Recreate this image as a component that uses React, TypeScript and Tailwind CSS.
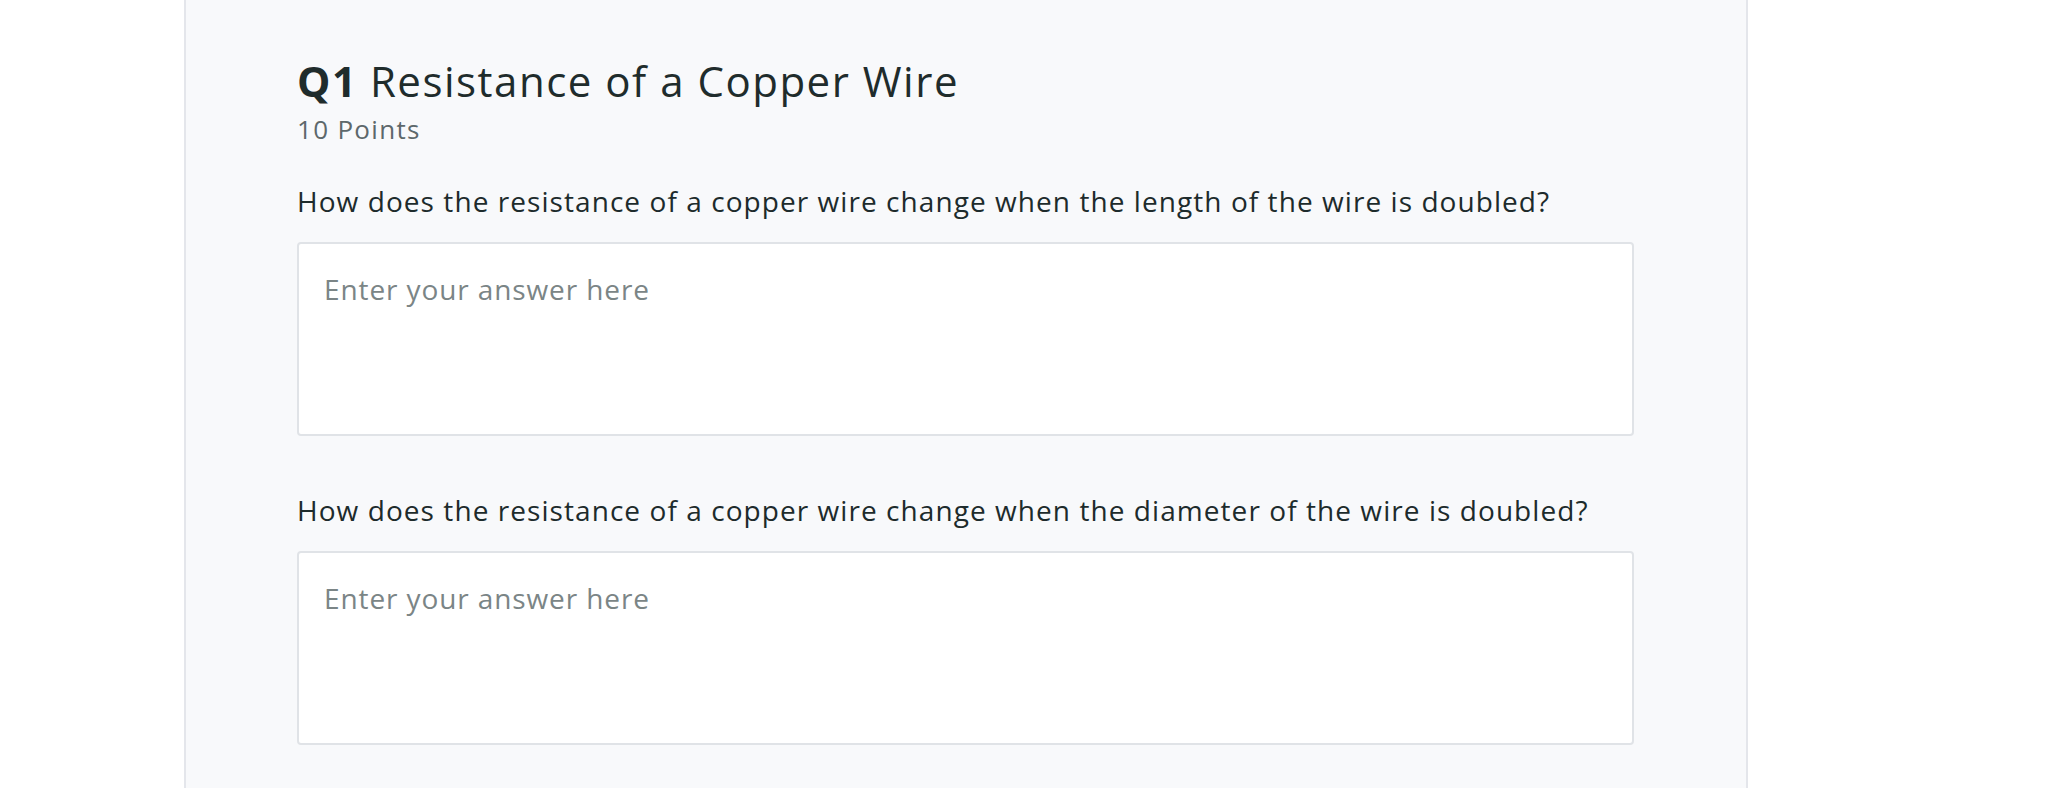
import React from "react";

const font = { fontFamily: "'Open Sans', Lato, sans-serif" };

function Question({ text }: { text: string }) {
  return (
    <div className="flex flex-col">
      <p className="text-[28px] leading-[34px] tracking-[0.038em] text-[#1d2b2c]">{text}</p>
      <textarea
        className="mt-[24px] h-[194px] w-[1337px] resize-none rounded-[4px] border-2 border-[#e0e3e7] bg-white pl-[25px] pt-[28px] text-[28px] leading-[34px] tracking-[0.032em] text-[#1d2b2c] outline-none placeholder:text-[#7b8586]"
        placeholder="Enter your answer here"
      />
    </div>
  );
}

export default function App() {
  return (
    <div className="h-[788px] w-[2067px] overflow-hidden bg-white" style={font}>
      <div className="ml-[184px] h-[788px] w-[1564px] border-x-2 border-[#e4e6eb] bg-[#f8f9fb] pl-[111px] pt-[56px]">
        <h1 className="text-[42px] leading-[50px] tracking-[0.036em] text-[#1f2c2c]">
          <span className="font-bold">Q1</span> Resistance of a Copper Wire
        </h1>
        <div className="mt-[7px] text-[26px] leading-[32px] tracking-[0.05em] text-[#5d686b]">10 Points</div>
        <div className="mt-[39px] flex flex-col gap-[57px]">
          <Question text="How does the resistance of a copper wire change when the length of the wire is doubled?" />
          <Question text="How does the resistance of a copper wire change when the diameter of the wire is doubled?" />
        </div>
      </div>
    </div>
  );
}
